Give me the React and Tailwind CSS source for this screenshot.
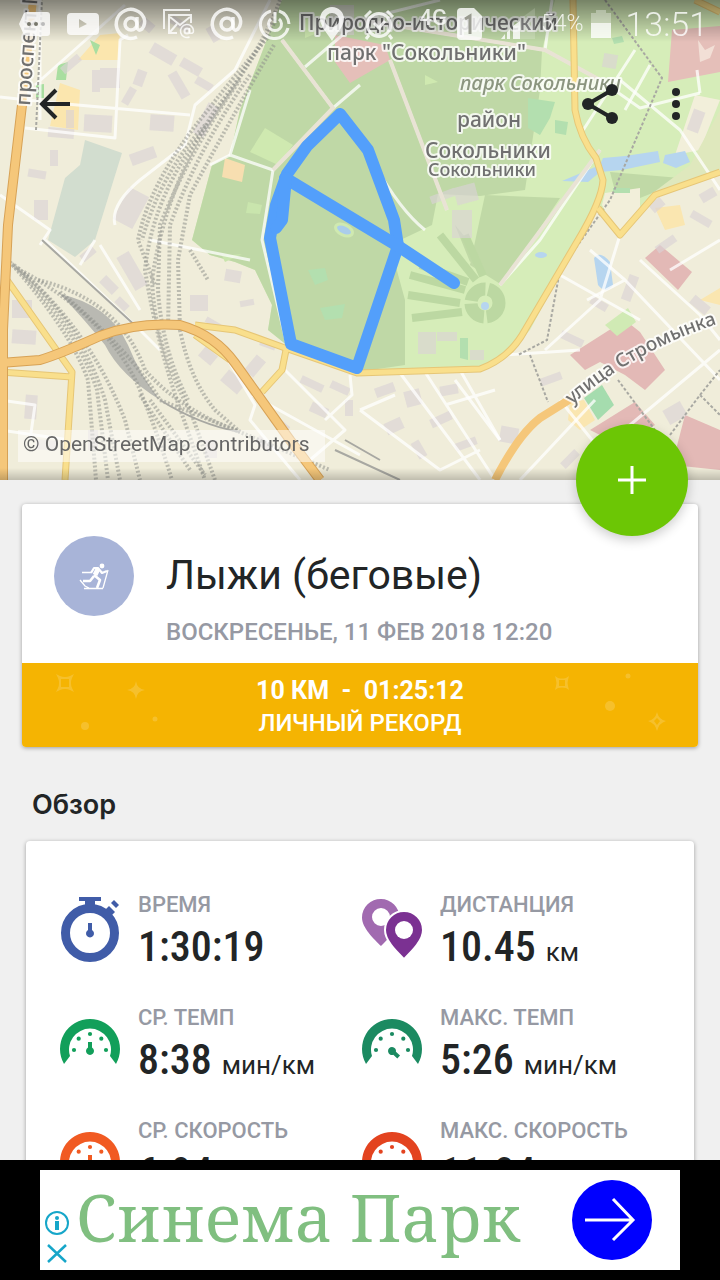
import { ArrowLeft } from "lucide-react";

const stats = [
  { label: "ВРЕМЯ", value: "1:30:19", unit: "", icon: "timer", color: "#405ca8" },
  { label: "ДИСТАНЦИЯ", value: "10.45", unit: "км", icon: "pins", color: "#7b3192" },
  { label: "СР. ТЕМП", value: "8:38", unit: "мин/км", icon: "gauge", color: "#129f5a" },
  { label: "МАКС. ТЕМП", value: "5:26", unit: "мин/км", icon: "gauge", color: "#1b8a61", max: true },
  { label: "СР. СКОРОСТЬ", value: "6.94", unit: "км/ч", icon: "gauge", color: "#f15a22" },
  { label: "МАКС. СКОРОСТЬ", value: "11.04", unit: "км/ч", icon: "gauge", color: "#e3431f", max: true },
];

const App = () => {
  return (
    <div className="flex h-screen flex-col bg-[#f0f0f0] font-['Roboto',sans-serif] text-[#222526]">
      <main className="min-h-0 flex-1 overflow-y-auto [scrollbar-width:none]">
        <header className="relative h-[480px]">
          <TrackMap />
          <div className="relative">
            <StatusBar />
            <nav className="flex h-28 items-center justify-between pr-5 pl-8">
              <button type="button" aria-label="Назад" className="flex size-12 items-center justify-center">
                <BackIcon />
              </button>
              <div className="flex items-center gap-7">
                <button type="button" aria-label="Поделиться" className="flex size-12 items-center justify-center">
                  <ShareIcon />
                </button>
                <button type="button" aria-label="Меню" className="flex size-12 items-center justify-center">
                  <svg viewBox="0 0 48 48" className="size-12" fill="currentColor">
                    <circle cx="24" cy="12" r="4" />
                    <circle cx="24" cy="24" r="4" />
                    <circle cx="24" cy="36" r="4" />
                  </svg>
                </button>
              </div>
            </nav>
          </div>
          <a
            href="#osm"
            className="absolute bottom-[18px] left-[18px] bg-white/50 pr-4 pb-1 pl-[5px] text-[21px] leading-7 text-[#666666]"
          >
            © OpenStreetMap contributors
          </a>
          <button
            type="button"
            aria-label="Добавить"
            className="absolute right-8 -bottom-14 z-10 flex size-28 items-center justify-center rounded-full bg-[#6cc605] shadow-[0_4px_12px_rgba(0,0,0,0.2)]"
          >
            <svg viewBox="0 0 28 28" className="size-7" stroke="#fff" strokeWidth="3">
              <path d="M0 14h28M14 0v28" />
            </svg>
          </button>
        </header>

        {/* Workout summary */}
        <section className="mx-[22px] mt-6 overflow-hidden rounded bg-white shadow-[0_1px_4px_rgba(0,0,0,0.35)]">
          <div className="flex gap-8 px-8 pt-8 pb-[13px]">
            <div className="flex size-20 shrink-0 items-center justify-center rounded-full bg-[#a8b4d8]">
              <SkiIcon />
            </div>
            <div className="pt-3">
              <h1 className="text-[41px] leading-[54px]">Лыжи (беговые)</h1>
              <p className="mt-3 text-2xl leading-9 font-medium text-[#9699a3]">ВОСКРЕСЕНЬЕ, 11 ФЕВ 2018 12:20</p>
            </div>
          </div>
          <div className="relative h-[84px] bg-[#f5b402] pt-3 text-center text-white">
            <Sparkles />
            <p className="relative text-[25px] leading-8 font-bold whitespace-pre">10 КМ  -  01:25:12</p>
            <p className="relative text-2xl leading-8 font-medium">ЛИЧНЫЙ РЕКОРД</p>
          </div>
        </section>

        {/* Overview */}
        <h2 className="mt-10 px-8 font-['Inter','Roboto',sans-serif] text-[27px] leading-9 font-semibold">Обзор</h2>
        <section className="mx-[26px] mt-[18px] grid grid-cols-2 rounded bg-white px-8 pt-12 pb-6 shadow-[0_1px_4px_rgba(0,0,0,0.35)]">
          {stats.map((stat) => (
            <Stat key={stat.label} {...stat} />
          ))}
        </section>
      </main>

      <AdBanner />
    </div>
  );
};

/* Reusable Components */

function Stat({ label, value, unit, icon, color, max }) {
  return (
    <div className="flex h-[113px] gap-4">
      <div className="w-16 shrink-0 pt-2">
        {icon === "timer" && <TimerIcon color={color} />}
        {icon === "pins" && <PinsIcon color={color} />}
        {icon === "gauge" && <GaugeIcon color={color} max={max} />}
      </div>
      <div className="whitespace-nowrap">
        <p className="text-[22px] leading-8 font-medium text-[#9699a3]">{label}</p>
        <p className="text-[26px] leading-[52px]">
          <span className="font-['Roboto_Condensed','Liberation_Sans_Narrow','Roboto',sans-serif] text-[42px] font-medium">
            {value}
          </span>
          {unit && <span className="ml-2.5">{unit}</span>}
        </p>
      </div>
    </div>
  );
}

function TimerIcon({ color }) {
  return (
    <svg viewBox="0 0 64 68" className="h-[68px] w-16" fill={color}>
      <circle cx="32" cy="36" r="24.5" fill="none" stroke={color} strokeWidth="9" />
      <path d="M21 0h22v4h-6v6H27V4h-6z" />
      <path d="m46 14 5-5 6 6-5 5z" />
      <path d="m53 6 3-3 5 5-3 3z" />
      <path d="M30 26h4v7a4 4 0 1 1-4 0z" />
    </svg>
  );
}

function PinsIcon({ color }) {
  return (
    <svg viewBox="0 0 64 68" className="h-[68px] w-16">
      <path
        fill="#a16ab0"
        fillRule="evenodd"
        d="M21 2a18.500 18.500 0 0 1 18.500 18.500C39.500 31 28 42 21 49 14 42 2 31 2 20.500A18.500 18.500 0 0 1 21 2zm0 9a9 9 0 1 0 0 18 9 9 0 0 0 0-18z"
      />
      <path
        fill={color}
        stroke="#fff"
        strokeWidth="2"
        d="M44 14a19 19 0 0 1 19 19c0 11-12 22-19 29-7-7-19-18-19-29a19 19 0 0 1 19-19z"
      />
      <circle cx="44" cy="33" r="9" fill="#fff" />
    </svg>
  );
}

function GaugeIcon({ color, max }) {
  const dots = [
    [16, 40],
    [20.7, 28.7],
    [32, 24],
    [43.3, 28.7],
    [48, 40],
  ];

  return (
    <svg viewBox="0 0 64 68" className="h-[68px] w-16" fill={color}>
      <path d="M6 54a30 30 0 1 1 52 0l-6-8a21 21 0 1 0-40 0z" />
      {dots.map(([x, y]) => (
        <circle key={x} cx={x} cy={y} r="2.1" />
      ))}
      <g transform={max ? "rotate(132 32 41)" : undefined}>
        <path d="M30 32h4v5.500a4 4 0 1 1-4 0z" />
      </g>
    </svg>
  );
}

function BackIcon() {
  return (
    <ArrowLeft size={54} strokeWidth={2} strokeLinecap="butt" strokeLinejoin="miter" absoluteStrokeWidth={false} />
  );
}

function ShareIcon() {
  return (
    <svg viewBox="0 0 48 48" className="size-12" fill="currentColor">
      <path d="M36 10 12 24l24 14" fill="none" stroke="currentColor" strokeWidth="4" />
      <circle cx="12" cy="24" r="6" />
      <circle cx="36" cy="10" r="6" />
      <circle cx="36" cy="38" r="6" />
    </svg>
  );
}

function SkiIcon() {
  return (
    <svg viewBox="0 0 30 26" className="h-[26px] w-[30px] overflow-visible" fill="none" stroke="#fff">
      <circle cx="23" cy="3" r="2.400" fill="#fff" stroke="none" />
      <path strokeWidth="1.300" d="M3 9.500h9M5 25.500h19M1 17l5 6 4 2M29 7l-5 18" />
      <path strokeWidth="2.200" strokeLinejoin="round" d="m12 10 3-5h4l4 5 5-2" />
      <path strokeWidth="5" strokeLinejoin="round" d="m19 6-3 6" />
      <path strokeWidth="2.600" strokeLinejoin="round" d="m15 12 6 5-3 8M15 13l-4 5H4" />
    </svg>
  );
}

function Sparkles() {
  return (
    <svg
      viewBox="0 0 676 84"
      preserveAspectRatio="xMidYMid slice"
      className="absolute inset-0 h-full w-full"
      fill="#fff"
      fillOpacity="0.17"
    >
      <path d="m34 11 4 2q5 2 10 0l4-2-2 4q-2 5 0 10l2 4-4-2q-5-2-10 0l-4 2 2-4q2-5 0-10zm5 5v8h8v-8z" fillRule="evenodd" />
      <path d="M114 18q1 8 9 9-8 1-9 9-1-8-9-9 8-1 9-9z" />
      <circle cx="63" cy="63" r="4" />
      <circle cx="133" cy="56" r="2.500" />
      <path d="m533 13 3 2q4 1 8 0l3-2-1 4q-1 3 0 6l1 4-3-2q-4-1-8 0l-3 2 1-4q1-3 0-6zm4 4v6h6v-6z" fillRule="evenodd" />
      <circle cx="588" cy="43" r="5" />
      <circle cx="606" cy="13" r="2.500" />
      <path d="M635 49q2 8 9 9-7 2-9 10-2-8-9-10 7-1 9-9zm0 6-3 3 3 4 3-4z" fillRule="evenodd" />
    </svg>
  );
}

function StatusBar() {
  return (
    <div className="flex h-12 items-center pr-3 pl-[19px] text-white/80">
      <div className="flex items-center gap-4">
        <svg viewBox="0 0 32 32" className="size-8" fill="currentColor">
          <path d="M8 4h20q3 0 3 3v18q0 3-3 3H8q-3 0-4-3L0 16l4-9q1-3 4-3z" />
          <g fill="#77776c">
            <circle cx="10" cy="16" r="2" />
            <circle cx="17" cy="16" r="2" />
            <circle cx="24" cy="16" r="2" fill="#bbb" />
          </g>
        </svg>
        <svg viewBox="0 0 32 32" className="size-8" fill="currentColor">
          <path fillRule="evenodd" d="M4 5h24q4 0 4 4v14q0 4-4 4H4q-4 0-4-4V9q0-4 4-4zm8 6v9l8-4z" />
        </svg>
        <AtIcon />
        <svg viewBox="0 0 32 32" className="size-8" fill="none" stroke="currentColor" strokeWidth="2">
          <path d="M1 21V2h26M14 25H6V7h22v8M7 9l10 8L27 9M7 24l7-8" />
          <circle cx="24" cy="23" r="2.500" />
          <path d="M26.500 20v5q4 1 4-2a6.500 6.500 0 1 0-4 6" strokeWidth="1.500" />
        </svg>
        <AtIcon />
        <svg viewBox="0 0 32 32" className="size-8" fill="none" stroke="currentColor" strokeWidth="3">
          <path d="M12 3a14 14 0 1 0 17 17M20 3a14 14 0 0 1 10 13" />
          <path d="M12 11a6.500 6.500 0 1 0 8 0M16 4v11" />
        </svg>
      </div>
      <svg viewBox="0 0 26 34" className="ml-7 h-[34px] w-[26px]" fill="currentColor">
        <path fillRule="evenodd" d="M13 0a12 12 0 0 1 12 12c0 8-9 16-12 22C10 28 1 20 1 12A12 12 0 0 1 13 0zm0 6a7 7 0 1 0 0 14 7 7 0 0 0 0-14z" />
      </svg>
      <div className="ml-auto flex items-center">
        <svg viewBox="0 0 32 32" className="size-8" fill="none" stroke="currentColor" strokeWidth="3">
          <circle cx="16" cy="17" r="11.500" />
          <path d="m2 9 6-6M30 9l-6-6M6 27l-3 4M26 27l3 4M11 15l5 5 6-7" />
        </svg>
        <span className="ml-6 h-9 text-[22px] leading-6 font-medium">4G</span>
        <svg viewBox="0 0 26 32" className="ml-2.5 h-8 w-[26px]">
          <path d="M4 0h13l8 8v20q0 4-4 4H4q-4 0-4-4V4q0-4 4-4z" fill="currentColor" />
          <path d="M8 11l5-3v18" fill="none" stroke="#999b90" strokeWidth="3" />
        </svg>
        <svg viewBox="0 0 44 32" className="ml-2 h-8 w-11" fill="currentColor">
          <path d="M10 31h4v-5zM16 31h3V21l-3 3zM22 31V18l7-5v18z" />
          <path d="M29 31V11L44 0v31z" fillOpacity="0.2" />
        </svg>
        <span className="ml-1.5 text-[23px] font-light">54%</span>
        <svg viewBox="0 0 20 30" className="ml-2 h-[30px] w-5" fill="currentColor">
          <path d="M5 1h10v3h5v10H0V4h5z" fillOpacity="0.4" />
          <path d="M0 14h20v15H0z" />
        </svg>
        <time className="ml-3.5 text-[34px] font-light">13:51</time>
      </div>
    </div>
  );
}

function AtIcon() {
  return (
    <svg viewBox="0 0 32 32" className="size-8 overflow-visible" fill="none" stroke="currentColor" strokeWidth="3.500">
      <circle cx="16" cy="16" r="6" />
      <path d="M22 9v10q1 5 5 2 4-5 2-11a14.500 14.500 0 1 0-7 19" />
    </svg>
  );
}

/* Map drawing */

const buildings = [
  [150, 48, 26, 12, 30], [180, 62, 22, 10, 30], [100, 68, 20, 20, 0], [92, 70, 8, 22, 0], [84, 115, 28, 17, 3],
  [150, 115, 24, 16, 4], [120, 92, 18, 8, -60], [165, 80, 28, 10, 60], [130, 150, 26, 12, -20], [48, 128, 26, 10, 5],
  [28, 170, 18, 8, 10], [60, 60, 22, 8, -40], [34, 200, 14, 20, 0], [120, 190, 22, 36, 28], [190, 295, 18, 16, 0],
  [225, 270, 16, 12, 10], [125, 252, 14, 38, -30], [12, 300, 20, 18, 0], [12, 330, 24, 14, 4], [25, 395, 12, 24, 4],
  [36, 440, 20, 10, 4], [88, 430, 10, 20, 0], [200, 350, 16, 12, 40], [222, 375, 22, 14, 40], [245, 360, 20, 12, -50],
  [300, 380, 24, 8, 25], [330, 384, 20, 8, 25], [310, 405, 18, 10, 25], [345, 400, 8, 16, 0], [270, 420, 20, 8, 40],
  [375, 385, 20, 10, -20], [405, 390, 16, 16, -15], [440, 385, 18, 10, -10], [385, 420, 18, 12, -25], [430, 415, 22, 9, -25],
  [500, 427, 18, 16, 10], [410, 445, 18, 9, 60], [455, 440, 22, 8, -20], [540, 375, 22, 8, -20], [560, 335, 24, 8, 25],
  [590, 300, 18, 8, 30], [655, 240, 22, 8, -35], [625, 275, 10, 26, 20], [690, 300, 20, 10, 40], [665, 405, 20, 16, -30],
  [600, 455, 26, 8, -45], [560, 455, 20, 8, -45], [650, 200, 14, 10, -40], [690, 215, 22, 8, 30], [700, 190, 16, 10, -30],
  [330, 5, 24, 30, 0], [455, 185, 22, 18, -15], [430, 192, 26, 8, -20], [452, 210, 20, 28, 0], [603, 54, 14, 14, 10],
  [418, 332, 18, 22, 0], [437, 332, 20, 9, 0], [470, 350, 14, 10, 0], [690, 110, 12, 22, 20], [200, 103, 12, 34, 28],
  [170, 20, 20, 8, 30], [205, 30, 16, 8, 60], [195, 80, 18, 8, 30], [135, 70, 10, 16, 20], [140, 20, 14, 10, 40],
  [50, 150, 8, 16, 0], [66, 110, 8, 18, 0], [100, 280, 18, 10, 45], [115, 300, 14, 8, 45], [80, 250, 16, 8, -40],
  [205, 320, 16, 6, 30], [260, 340, 16, 8, 20], [240, 300, 14, 6, -10], [205, 440, 12, 18, 0], [255, 440, 18, 8, 40],
];

const streets = [
  "M0 97 L55 103 L190 115 M25 128 L115 138 L120 40 L128 35 M40 0 L40 120 M125 5 L35 85",
  "M0 195 L50 230 L40 245 M115 225 Q110 205 140 180 L185 145 L195 105 L235 70 L270 0",
  "M282 40 L333 108 L273 170 M305 67 L360 20 L440 0 M333 108 L360 85 M273 170 L230 155 L250 90",
  "M273 170 L262 240 L287 345 M230 155 L210 165 M250 260 L150 240",
  "M390 60 L447 210 M375 165 Q400 210 425 230 M360 20 L545 50 L600 80 L640 108 L700 93",
  "M635 50 L580 135 M650 65 L625 110 M700 93 L697 70 M545 50 L552 0 M600 150 L540 240 L500 285",
  "M620 235 L600 300 L545 350 M560 275 L640 320 M620 80 L680 130 L720 190 M640 260 L700 315 L720 340",
  "M587 300 L625 280 L720 380 M560 400 L600 450 L720 350 M625 280 L590 250",
  "M400 373 L480 480 M425 372 L495 480 M460 370 L500 440 M360 410 L440 470 L480 450 M445 405 L495 390 M395 395 L360 410",
  "M228 360 L255 405 L250 420 L300 480 M285 370 L345 430 L310 460 M350 375 L352 395 L325 420 M252 395 L360 455",
  "M0 400 L35 405 L30 440 M100 245 L140 310 M80 265 L95 240 M45 240 L140 330 L160 350 M0 430 L70 440",
  "M605 480 L640 440 M520 480 L595 400 M505 355 L580 350 M455 380 L500 440 M670 270 L720 240",
];

const tracks = [
  "M280 0 Q262 50 215 110 Q165 190 152 280 Q155 350 190 410 L215 480",
  "M276 20 Q240 80 200 135 Q152 200 145 270 Q158 350 184 420 L205 480",
  "M270 35 Q235 75 208 110 Q150 180 138 240 L155 285",
  "M274 45 Q230 120 190 195 L178 260 L180 330 Q190 380 215 410 L240 432",
  "M250 75 Q200 145 170 225 L168 330",
  "M240 80 Q190 150 160 225 L158 290 Q162 350 188 400",
  "M205 125 Q160 175 142 240",
  "M10 262 Q70 330 88 380 L96 480",
  "M14 265 Q80 320 105 400 L120 480",
  "M18 268 Q90 330 125 420 L140 480",
  "M24 272 Q110 320 140 390 Q160 440 172 480",
  "M12 264 Q76 326 97 390 L108 480",
  "M38 280 Q120 300 145 370 Q180 410 240 432",
  "M60 292 Q130 350 160 400 L240 432 L330 470",
  "M190 250 L208 280 M140 395 L190 470 M150 400 L205 475",
];

const label = "fill-[#707070] stroke-white/80 [paint-order:stroke] [stroke-linejoin:round] [stroke-width:4px]";

function TrackMap() {
  return (
    <svg
      viewBox="0 0 720 480"
      preserveAspectRatio="xMidYMid slice"
      className="absolute inset-0 h-full w-full font-['Noto_Sans',sans-serif]"
      role="img"
      aria-label="Карта маршрута"
    >
      <defs>
        <linearGradient id="topShade" x1="0" y1="0" x2="0" y2="1">
          <stop offset="0" stopColor="#000" stopOpacity="0.45" />
          <stop offset="1" stopColor="#000" stopOpacity="0" />
        </linearGradient>
        <linearGradient id="bottomShade" x1="0" y1="0" x2="0" y2="1">
          <stop offset="0" stopColor="#000" stopOpacity="0" />
          <stop offset="1" stopColor="#000" stopOpacity="0.2" />
        </linearGradient>
        <path id="stromynka" d="M572 405 Q640 345 740 317" />
      </defs>

      <rect width="720" height="480" fill="#f0edda" />

      {/* land use */}
      <path d="M85 140 L122 153 L95 240 L75 257 L48 240 L65 178 L80 165z" fill="#d2ddcf" />
      <path d="M100 35 L120 33 L118 60 L78 60z M60 83 L80 90 L78 130 L50 126z" fill="#fbe6ae" />
      <path d="M90 40 L100 45 L96 55z M58 65 L68 62 L66 80 L56 80z M36 85 L44 84 L44 98 L36 98z" fill="#a9dea0" />
      <path d="M282 0 L720 0 L720 165 L655 195 L620 235 L598 208 L578 240 L530 330 L505 358 L480 368 L357 372 L288 346 L268 330 L272 305 L255 270 L235 262 L210 255 L192 240 L212 165 L230 155 L240 110z" fill="#d6edb9" />
      <path d="M282 0 L555 0 L542 50 L540 90 L525 190 L480 196 L438 194 L432 225 L390 245 L405 300 L405 365 L357 372 L288 346 L268 330 L272 305 L255 270 L235 262 L210 255 L192 240 L212 165 L230 155 L240 110z" fill="#bfd8a6" />
      <path d="M485 195 L560 198 L502 285 L470 265z M455 225 L480 255 L470 262z M610 172 L680 178 L655 192 L640 198 L616 195z" fill="#c0d9a6" />
      <circle cx="485" cy="303" r="14" fill="none" stroke="#bcd8a2" strokeWidth="13" strokeDasharray="20 3" />
      <path d="M410 275 L465 290 M408 295 L460 303 M412 318 L462 312 M420 265 L468 282 M440 235 L476 280 M465 235 L483 276" stroke="#bcd8a2" strokeWidth="8" />
      <path d="M265 128 L293 145 L278 165 L250 152z" fill="#cfe9b0" />
      <path d="M305 20 L330 12 L325 30 L305 38z M425 75 L438 82 L425 85z" fill="#cfe9b0" />
      <path d="M225 158 L245 165 L242 182 L222 177z" fill="#f7deb0" />
      <path d="M335 35 L385 45 L390 60 L350 83 L335 62z M672 30 L720 26 L720 72 L668 82z" fill="#e5bfb9" />
      <path d="M698 40 L705 50 L715 45 L710 58 L700 62z" fill="#f2dfd6" />
      <path d="M605 193 L640 188 L640 210 L618 235 L602 205z M695 95 L720 100 L700 150 L675 155z" fill="#f2efda" />
      <path d="M720 110 L720 170 L650 195 L690 165z" fill="#dfe8bd" />
      <path d="M660 245 L692 272 L678 290 L645 258z M570 355 L625 320 L640 332 L665 370 L645 390 L625 375 L600 362 L585 370z M590 430 L635 402 L655 425 L620 445z M685 415 L720 430 L720 470 L672 465z" fill="#e3b9b6" />
      <path d="M605 325 L628 308 L636 322 L617 336z" fill="#d0eab4" />
      <path d="M584 398 L602 385 L614 405 L598 420z" fill="#a5dcae" />
      <path d="M570 402 L584 400 L595 420 L580 430 L568 420z M655 208 L680 205 L685 225 L665 230z M700 300 L720 288 L720 305z" fill="#fae6b0" />
      <path d="M528 98 L555 102 L550 118 L540 135 L528 128z M555 120 L568 122 L566 135 L555 133z M613 188 L630 188 L630 193 L613 193z M612 38 L622 36 L624 42 L614 44z" fill="#b3dfaf" />
      <path d="M308 270 L325 268 L328 280 L315 285z M320 308 L345 304 L342 318 L325 320z M460 338 L468 338 L468 360 L460 358z" fill="#b3dfaf" />
      <path d="M242 254 L225 262 L222 256z M248 202 L262 205 L260 214 L246 213z" fill="#c9e5ad" />

      {/* water */}
      <path d="M625 156 L658 151 L660 162 L622 170 L600 172 L588 182 L562 181 L600 165 L603 158z M665 155 L685 151 L690 162 L676 168 L663 163z M594 258 Q600 250 610 262 L613 285 Q606 295 598 285z" fill="#b6d5ef" />
      <ellipse cx="541" cy="255" rx="6" ry="3" fill="#b6d5ef" />
      <ellipse cx="344" cy="230" rx="9" ry="5" fill="#aacdea" stroke="#cfe9b0" strokeWidth="3" transform="rotate(25 344 230)" />
      <circle cx="485" cy="306" r="4" fill="#b6d5ef" />

      {/* buildings and side streets */}
      <g fill="#dad3d6" opacity="0.65">
        {buildings.map(([x, y, w, h, angle], i) => (
          <rect key={i} x={x} y={y} width={w} height={h} transform={`rotate(${angle} ${x + w / 2} ${y + h / 2})`} />
        ))}
      </g>
      <g fill="none" stroke="#fff" strokeOpacity="0.75" strokeWidth="3" strokeLinejoin="round">
        {streets.map((d) => (
          <path key={d} d={d} />
        ))}
      </g>
      <path d="M282 40 L333 108 L273 170 M390 60 L447 210 M600 150 L500 285 M360 20 L545 50 L600 80" fill="none" stroke="#e9e3d5" strokeWidth="4" />

      {/* railway */}
      <path d="M60 294 Q110 305 128 345 Q140 375 160 400 Q120 375 105 345 Q85 320 60 294z" fill="#b9b9b2" />
      <g fill="none" stroke="#8f918c" strokeOpacity="0.55" strokeWidth="4" strokeDasharray="2 2">
        {tracks.map((d) => (
          <path key={d} d={d} />
        ))}
      </g>
      <g fill="none" stroke="#a8a8a2" strokeWidth="2">
        <path d="M42 240 L140 330 M160 400 Q200 425 240 432 M335 450 L400 480 M345 440 L380 460" />
        <path d="M605 0 L662 78 L610 200 L560 270 L547 340 L518 355" strokeDasharray="3 2" />
        <path d="M530 355 L548 402 M618 380 L655 430 M670 435 L700 395 L720 370 M700 395 L720 415 M36 130 L42 0" strokeDasharray="3 2" />
      </g>

      {/* main roads */}
      <g fill="none" strokeLinejoin="round">
        <g stroke="#e6c676" strokeWidth="7">
          <path d="M573 0 L575 110 Q580 138 596 158 L603 180 Q602 200 578 240 L525 330 Q510 358 480 369 L357 373 L285 348 L235 330 L195 325" />
          <path d="M720 172 L655 195 L620 235 L598 208 M7 280 L55 348 L72 372 L65 480 M0 372 L72 377 M0 320 L7 282 M286 350 L282 370 L262 392 M695 0 L720 12 M195 335 L230 360" />
        </g>
        <g stroke="#f9df8c" strokeWidth="5">
          <path d="M573 0 L575 110 Q580 138 596 158 L603 180 Q602 200 578 240 L525 330 Q510 358 480 369 L357 373 L285 348 L235 330 L195 325" />
          <path d="M720 172 L655 195 L620 235 L598 208 M7 280 L55 348 L72 372 L65 480 M0 372 L72 377 M0 320 L7 282 M286 350 L282 370 L262 392 M695 0 L720 12 M195 335 L230 360" />
        </g>
        <g stroke="#d7a256" strokeWidth="10">
          <path d="M0 363 L40 360 Q60 354 100 336 Q135 322 180 325 Q215 335 235 363 L290 440 L320 480" />
          <path d="M22 105 L8 225 L3 330 L3 480" />
        </g>
        <g stroke="#f5c77a" strokeWidth="8">
          <path d="M0 363 L40 360 Q60 354 100 336 Q135 322 180 325 Q215 335 235 363 L290 440 L320 480" />
          <path d="M33 0 L22 105 L8 225 L3 330 L3 480 M495 480 Q518 435 540 418 L572 398" />
        </g>
      </g>

      {/* place names */}
      <g className={label} fontSize="21" fontWeight="500">
        <text x="299" y="30">Природно-исторический</text>
        <text x="327" y="60">парк "Сокольники"</text>
        <text x="457" y="127">район</text>
        <text x="425" y="158">Сокольники</text>
        <text x="428" y="176" fontSize="18">Сокольники</text>
        <text x="460" y="90" fontStyle="italic" fontSize="20" className="fill-[#8b957f]">парк Сокольники</text>
        <text transform="translate(30 106) rotate(-86)">проспект Мира</text>
        <text fontSize="19">
          <textPath href="#stromynka">улица Стромынка</textPath>
        </text>
      </g>

      {/* recorded route */}
      <g fill="none" stroke="#539ffb" strokeWidth="12" strokeLinecap="round" strokeLinejoin="round">
        <path d="M340 114 L307 146 L287 174 L276 205 L270 238 L291 344 L357 368 L398 246 L394 220 L368 150z" />
        <path d="M285 178 L398 246 L454 283" />
        <path d="M286 178 L282 220 L276 228" />
      </g>

      <rect width="720" height="42" fill="url(#topShade)" />
      <rect y="468" width="720" height="12" fill="url(#bottomShade)" />
    </svg>
  );
}

function AdBanner() {
  return (
    <aside className="shrink-0 bg-black px-10 py-2.5">
      <div className="flex h-[100px] items-center bg-white pr-7 pl-1">
        <div className="flex flex-col gap-1 self-end pb-1">
          <button type="button" aria-label="О рекламе" className="size-[26px]">
            <svg viewBox="0 0 26 26" fill="#16a6c9">
              <circle cx="13" cy="13" r="11" fill="none" stroke="#16a6c9" strokeWidth="2" />
              <circle cx="13" cy="8" r="2" />
              <path d="M11 11h4v9h-4z" />
            </svg>
          </button>
          <button type="button" aria-label="Закрыть рекламу" className="size-[26px]">
            <svg viewBox="0 0 26 26" stroke="#16a6c9" strokeWidth="2.500">
              <path d="m4 5 18 17M22 5 4 22" />
            </svg>
          </button>
        </div>
        <a href="#ad" className="flex flex-1 items-center justify-between pl-1.5">
          <span className="pb-2 font-['Noto_Serif','DejaVu_Serif_Condensed','Liberation_Serif',serif] text-[66px] leading-none whitespace-nowrap text-[#80bf80]">
            Синема Парк
          </span>
          <span className="flex size-20 items-center justify-center rounded-full bg-[#0000ff]">
            <svg viewBox="0 0 80 80" className="size-20" fill="none" stroke="#fff" strokeWidth="3">
              <path d="M13 40h48M41 19l20 21-20 20" />
            </svg>
          </span>
        </a>
      </div>
    </aside>
  );
}

export default App;
